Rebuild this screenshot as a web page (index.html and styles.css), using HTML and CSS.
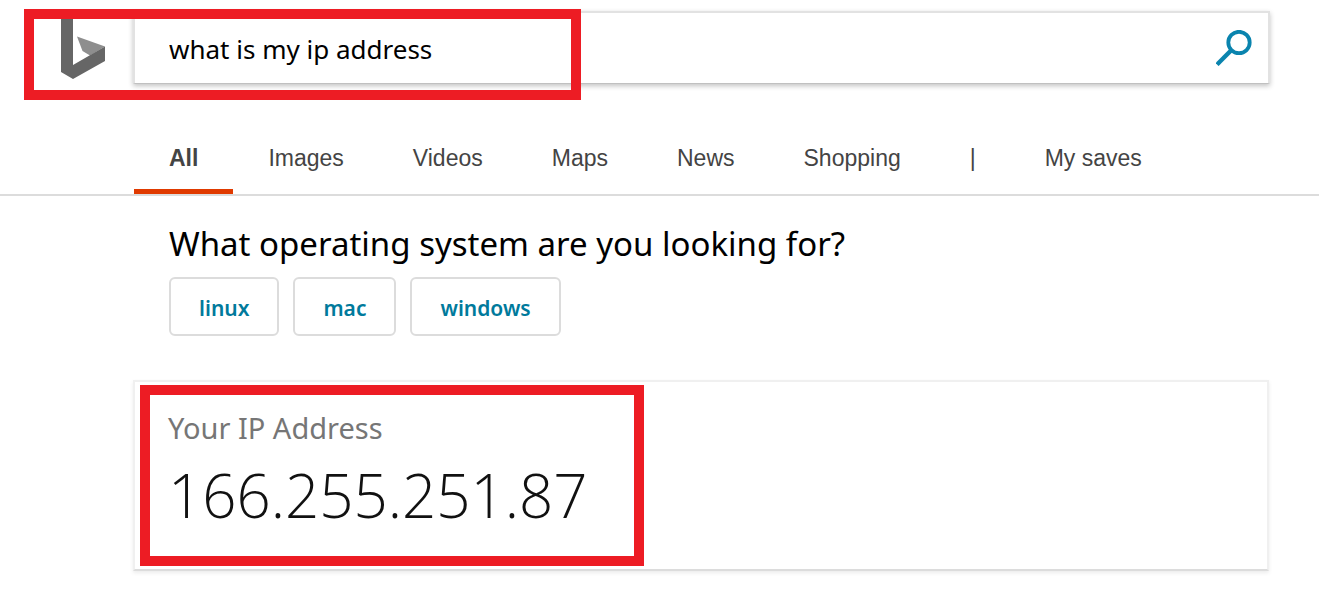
FILE: index.html
```html
<!DOCTYPE html>
<html lang="en">
<head>
<meta charset="utf-8">
<meta name="viewport" content="width=device-width, initial-scale=1">
<title>what is my ip address</title>
<link rel="stylesheet" href="styles.css">
</head>
<body>
<header class="header">
  <a class="logo" href="#" aria-label="Home">
    <svg width="46" height="72" viewBox="0 0 46 72" aria-hidden="true">
      <path d="M17 28.500 45 38.500 30 47.500 22.500 43Z" fill="#8e8e8e"/>
      <path d="M1 5 13 10V57L45 38.500V53L13 71 1 64Z" fill="#666"/>
    </svg>
  </a>
  <form class="search">
    <input class="search-input" type="text" aria-label="Search" value="what is my ip address">
    <button class="search-button" type="button" aria-label="Search">
      <svg width="36" height="36" viewBox="0 0 36 36" aria-hidden="true">
        <circle cx="23" cy="12.500" r="10.700" fill="none" stroke="#0a84ae" stroke-width="3.800"/>
        <path d="M15.500 20 1 34.500" fill="none" stroke="#0a84ae" stroke-width="4.400"/>
      </svg>
    </button>
  </form>
  <div class="mark mark-search"></div>
</header>
<nav class="tabs">
  <a class="tab tab-active" href="#">All</a>
  <a class="tab" href="#">Images</a>
  <a class="tab" href="#">Videos</a>
  <a class="tab" href="#">Maps</a>
  <a class="tab" href="#">News</a>
  <a class="tab" href="#">Shopping</a>
  <span class="tab">|</span>
  <a class="tab" href="#">My saves</a>
</nav>
<main class="content">
  <section class="refine">
    <h2 class="question">What operating system are you looking for?</h2>
    <div class="choices">
      <button class="choice" type="button">linux</button>
      <button class="choice" type="button">mac</button>
      <button class="choice" type="button">windows</button>
    </div>
  </section>
  <section class="card">
    <div class="card-label">Your IP Address</div>
    <div class="card-value">166.255.251.87</div>
    <div class="mark mark-answer"></div>
  </section>
</main>
</body>
</html>
```
FILE: styles.css
```css
* { box-sizing: border-box; }

body {
  margin: 0;
  background: #fff;
  color: #000;
  font-family: "Segoe UI", "Noto Sans", "Open Sans", sans-serif;
}

.header {
  position: relative;
  display: flex;
  padding: 11px 49px 0 60px;
}

.logo {
  flex: none;
  width: 73px;
}

.logo svg { display: block; margin-top: -3px; }

.search {
  flex: 1;
  display: flex;
  align-items: center;
  height: 73px;
  padding-right: 16px;
  border: 2px solid #e2e2e2;
  border-bottom: 1px solid #c0c0c0;
  box-shadow: 0 2px 5px rgba(0, 0, 0, 0.24);
}

.search-input {
  flex: 1;
  min-width: 0;
  padding: 2px 34px 0;
  border: 0;
  outline: 0;
  background: none;
  color: #000;
  font-family: inherit;
  font-size: 26px;
  line-height: 36px;
}

.search-button {
  padding: 0;
  border: 0;
  background: none;
}

.search-button svg { display: block; }

.mark {
  position: absolute;
  border: 10px solid #ed1c24;
  pointer-events: none;
}

.mark-search {
  left: 24px;
  top: 9px;
  width: 557px;
  height: 91px;
}

.tabs {
  display: flex;
  margin-top: 38px;
  padding-left: 134px;
  border-bottom: 2px solid #dcdcdc;
  font: 23px/28px "Liberation Sans", Arial, sans-serif;
}

.tab {
  padding: 22px 34px 17px 35px;
  border-bottom: 5px solid transparent;
  color: #444;
  text-decoration: none;
  white-space: nowrap;
}

.tab-active {
  padding-right: 35px;
  border-color: #e03a00;
  font-weight: 700;
}

.content { padding: 24px 50px 24px 133px; }

.refine { padding-left: 36px; }

.question {
  margin: 0;
  font-size: 33px;
  font-weight: 400;
  line-height: 48px;
}

.choices {
  display: flex;
  gap: 14px;
  margin-top: 9px;
}

.choice {
  height: 59px;
  padding: 2px 28px 0;
  border: 2px solid #dcdcdc;
  border-radius: 6px;
  background: #fff;
  color: #007a9c;
  font-family: inherit;
  font-size: 21px;
  font-weight: 600;
  line-height: 32px;
}

.card {
  position: relative;
  margin-top: 44px;
  padding: 24px 33px 29px;
  border: 2px solid #f0f0f0;
  border-bottom-color: #dcdcdc;
  box-shadow: 0 2px 4px rgba(0, 0, 0, 0.08);
}

.card-label {
  color: #767676;
  font-size: 29px;
  line-height: 44px;
}

.card-value {
  color: #111;
  font-family: "Segoe UI", "Open Sans", "Noto Sans", sans-serif;
  font-size: 60px;
  font-weight: 300;
  line-height: 90px;
}

.mark-answer {
  left: 5px;
  top: 3px;
  width: 504px;
  height: 181px;
}
```
